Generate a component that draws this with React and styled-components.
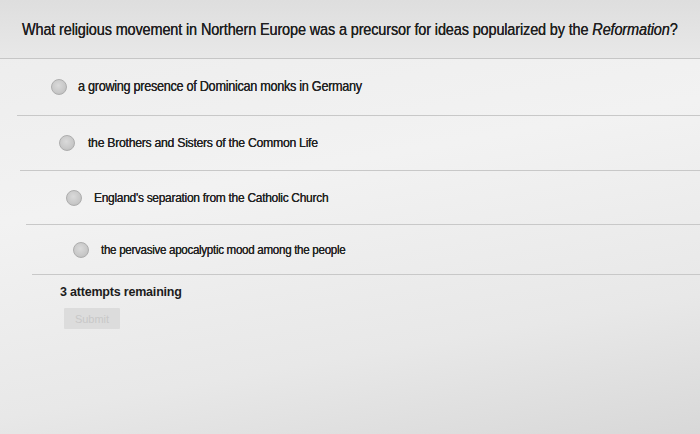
import React from "react";
import styled, { createGlobalStyle } from "styled-components";

const GlobalStyle = createGlobalStyle`
  html, body {
    margin: 0;
    padding: 0;
  }
  body {
    width: 700px;
    height: 434px;
    overflow: hidden;
    font-family: "Liberation Sans", Arial, sans-serif;
    color: #2a2a2a;
  }
`;

const Page = styled.div`
  width: 700px;
  height: 434px;
  background: linear-gradient(170deg, #ececec 0%, #f2f2f2 40%, #e8e8e8 75%, #d8d8d8 100%);
  display: flex;
  flex-direction: column;
`;

const Header = styled.div`
  height: 57px;
  background: linear-gradient(180deg, #dedede 0%, #e4e4e4 60%, #e8e8e8 100%);
  display: flex;
  align-items: center;
  padding-left: 22px;
  padding-bottom: 1px;
  border-bottom: 1px solid #c6c6c6;
`;

const Question = styled.h1`
  margin: 0;
  font-size: 14.5px;
  font-weight: normal;
  letter-spacing: -0.15px;
  color: #1f1f1f;
  text-shadow: 0 0 0.4px #1f1f1f;
  transform: scaleY(1.1);
  em {
    font-style: italic;
  }
`;

const Options = styled.div`
  display: flex;
  flex-direction: column;
`;

const Row = styled.label`
  height: ${(p) => p.$h}px;
  margin-left: ${(p) => p.$line}px;
  padding-left: ${(p) => p.$indent}px;
  border-bottom: 1px solid #c8c8c8;
  display: flex;
  align-items: center;
  gap: ${(p) => p.$gap}px;
  box-sizing: border-box;
`;

const Radio = styled.span`
  width: 16px;
  height: 16px;
  border-radius: 50%;
  background: radial-gradient(circle at 45% 40%, #dadada 0%, #c8c8c8 60%, #b6b6b6 100%);
  border: 1px solid #adadad;
  box-sizing: border-box;
  flex-shrink: 0;
`;

const OptionText = styled.span`
  font-size: ${(p) => p.$size}px;
  letter-spacing: -0.3px;
  color: #222;
  text-shadow: 0 0 0.4px #222;
  transform: scaleY(1.1);
`;

const Footer = styled.div`
  padding-left: 60px;
  padding-top: 10px;
  display: flex;
  flex-direction: column;
  gap: 9px;
`;

const Attempts = styled.div`
  font-size: 12.5px;
  font-weight: bold;
  letter-spacing: -0.2px;
  color: #1c1c1c;
`;

const SubmitButton = styled.button`
  width: 56px;
  height: 21px;
  margin-left: 4px;
  border: none;
  border-radius: 1px;
  background: #dcdcdc;
  color: #c8c8c8;
  font-family: "Liberation Sans", Arial, sans-serif;
  font-size: 11px;
  padding: 0;
  cursor: default;
`;

const options = [
  { text: "a growing presence of Dominican monks in Germany", h: 57, line: 17, indent: 34, gap: 11, size: 12.7 },
  { text: "the Brothers and Sisters of the Common Life", h: 55, line: 20, indent: 39, gap: 13, size: 12.3 },
  { text: "England's separation from the Catholic Church", h: 54, line: 26, indent: 40, gap: 12, size: 12.0 },
  { text: "the pervasive apocalyptic mood among the people", h: 50, line: 32, indent: 41, gap: 12, size: 11.6 },
];

export default function App() {
  return (
    <>
      <GlobalStyle />
      <Page>
        <Header>
          <Question>
            What religious movement in Northern Europe was a precursor for ideas popularized by the{" "}
            <em>Reformation</em>?
          </Question>
        </Header>
        <Options>
          {options.map((o) => (
            <Row key={o.text} $h={o.h} $line={o.line} $indent={o.indent} $gap={o.gap}>
              <Radio />
              <OptionText $size={o.size}>{o.text}</OptionText>
            </Row>
          ))}
        </Options>
        <Footer>
          <Attempts>3 attempts remaining</Attempts>
          <SubmitButton disabled>Submit</SubmitButton>
        </Footer>
      </Page>
    </>
  );
}
